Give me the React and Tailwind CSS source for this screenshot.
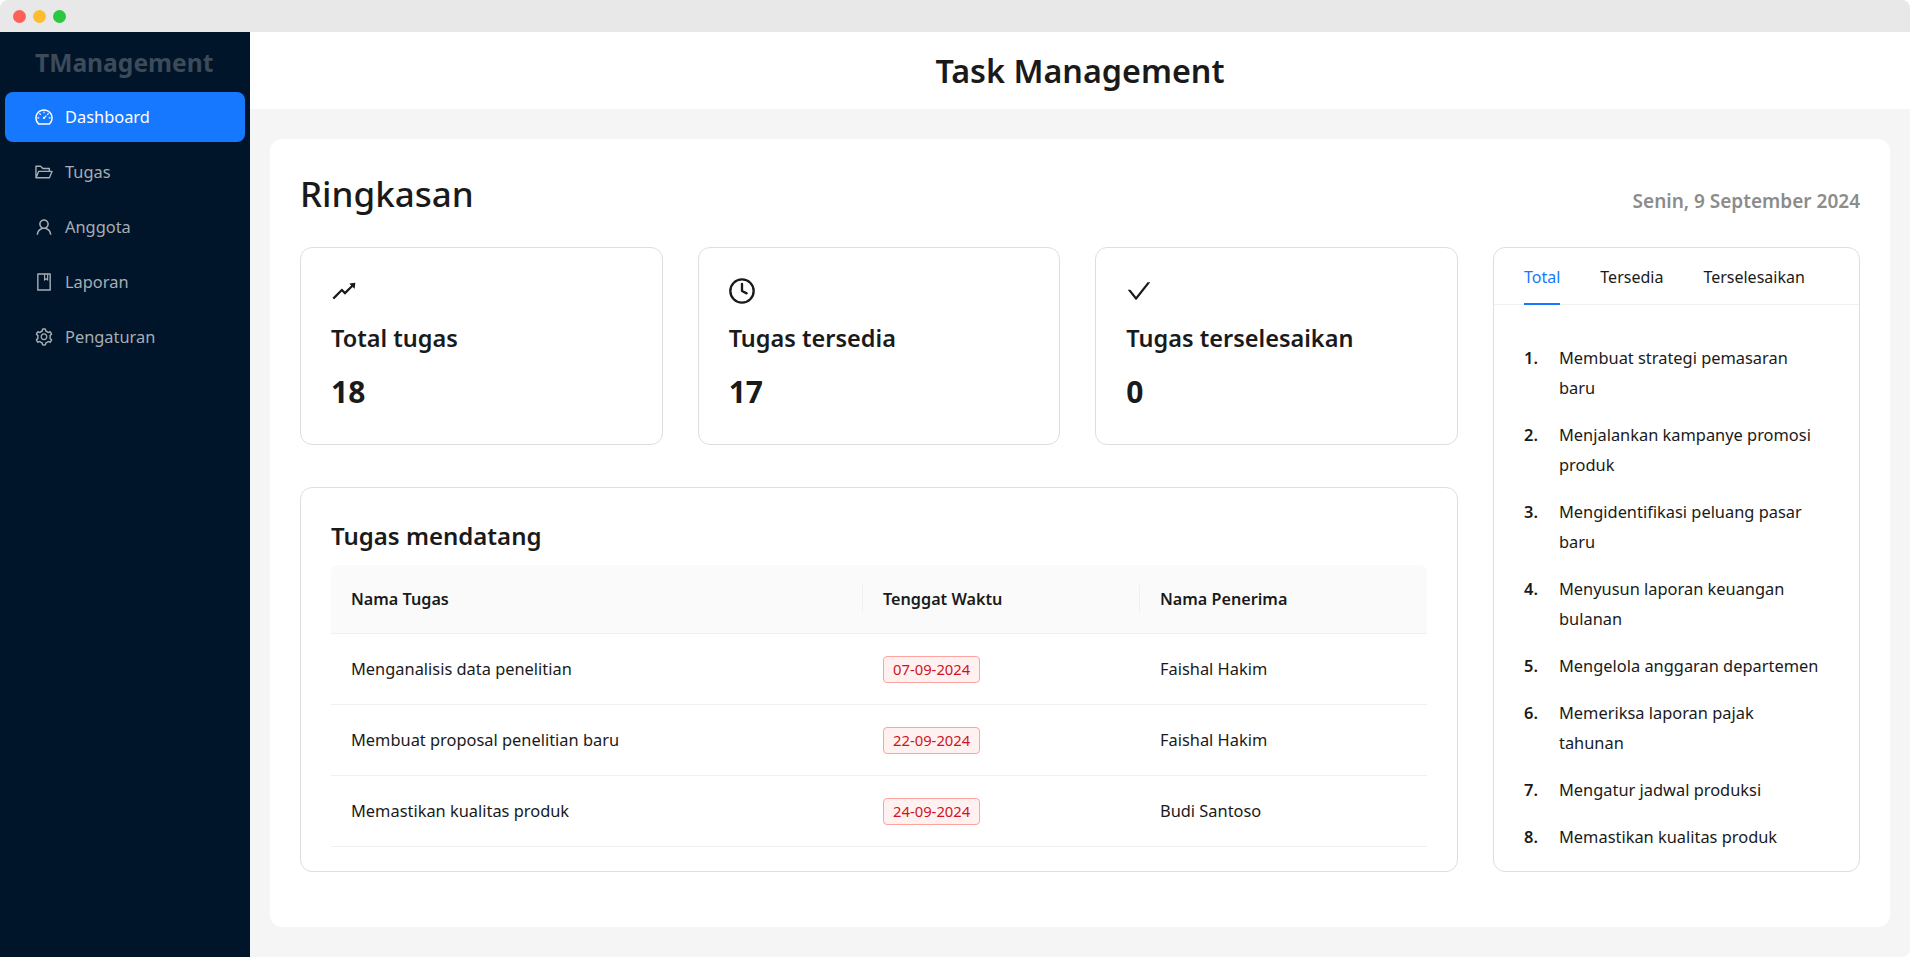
import React from "react";
import { AiOutlineDashboard, AiOutlineFolderOpen, AiOutlineUser, AiOutlineBook, AiOutlineSetting, AiOutlineRise, AiOutlineCheck } from "react-icons/ai";
import { LuClock } from "react-icons/lu";

const menu = [
  ["Dashboard", AiOutlineDashboard],
  ["Tugas", AiOutlineFolderOpen],
  ["Anggota", AiOutlineUser],
  ["Laporan", AiOutlineBook],
  ["Pengaturan", AiOutlineSetting],
];
const stats = [
  ["Total tugas", "18", AiOutlineRise],
  ["Tugas tersedia", "17", LuClock],
  ["Tugas terselesaikan", "0", AiOutlineCheck],
];
const rows = [
  ["Menganalisis data penelitian", "07-09-2024", "Faishal Hakim"],
  ["Membuat proposal penelitian baru", "22-09-2024", "Faishal Hakim"],
  ["Memastikan kualitas produk", "24-09-2024", "Budi Santoso"],
];
const list = [
  "Membuat strategi pemasaran baru",
  "Menjalankan kampanye promosi produk",
  "Mengidentifikasi peluang pasar baru",
  "Menyusun laporan keuangan bulanan",
  "Mengelola anggaran departemen",
  "Memeriksa laporan pajak tahunan",
  "Mengatur jadwal produksi",
  "Memastikan kualitas produk",
];

export default function App() {
  return (
    <div className="h-[957px] w-[1910px] overflow-hidden bg-white font-['Noto_Sans',sans-serif] text-[#1a1a1a]">
      <div className="h-8 rounded-t-lg bg-[#e8e8e8] flex items-center gap-[7px] pl-[13px]">
        <span className="h-[13px] w-[13px] rounded-full bg-[#ff5f57]" />
        <span className="h-[13px] w-[13px] rounded-full bg-[#febc2e]" />
        <span className="h-[13px] w-[13px] rounded-full bg-[#28c840]" />
      </div>
      <div className="flex h-[925px]">
        <aside className="w-[250px] shrink-0 bg-[#001529]">
          <div className="h-[60px] pl-[35px] pt-[11px] text-[24.6px] leading-[40px] font-bold text-[#3c4a59]">TManagement</div>
          <nav className="flex flex-col gap-[5px] px-[5px]">
            {menu.map(([label, Icon], i) => (
              <div
                key={label}
                className={i === 0
                  ? "flex h-[50px] items-center gap-[11px] rounded-lg bg-[#1677ff] pl-[29px] text-[16.4px] text-white"
                  : "flex h-[50px] items-center gap-[11px] rounded-lg pl-[29px] text-[16.4px] text-[#a6adb4]"}
              >
                <Icon className="h-5 w-5" />
                <span>{label}</span>
              </div>
            ))}
          </nav>
        </aside>
        <main className="flex-1 rounded-br-lg bg-[#f5f5f5]">
          <header className="flex h-[77px] items-center justify-center bg-white text-[32.3px] font-semibold">Task Management</header>
          <div className="mx-5 mt-[30px] h-[788px] rounded-xl bg-white px-[30px] pt-[30px]">
            <div className="flex h-[78px] items-start justify-between">
              <h1 className="text-[35px] leading-[50px] font-medium">Ringkasan</h1>
              <div className="pt-[17px] text-[19px] leading-[30px] font-semibold text-[#8c8c8c]">Senin, 9 September 2024</div>
            </div>
            <div className="flex gap-[35px]">
              <div className="w-[1158px]">
                <div className="grid grid-cols-3 gap-[35px]">
                  {stats.map(([title, val, Icon]) => (
                    <div key={title} className="h-[198px] rounded-xl border border-[#dedede] pl-[30px] pt-[29px]">
                      <Icon className="-ml-px h-[28px] w-[28px]" />
                      <div className="mt-[15px] text-[23.5px] leading-[36px] font-semibold">{title}</div>
                      <div className="mt-[14px] text-[30px] leading-[44px] font-bold">{val}</div>
                    </div>
                  ))}
                </div>
                <div className="mt-[42px] h-[385px] rounded-xl border border-[#dedede] px-[30px] pt-[30px]">
                  <h2 className="text-[24px] leading-[36px] font-semibold">Tugas mendatang</h2>
                  <div className="mt-[11px] flex h-[69px] items-center rounded-t-lg border-b border-[#f0f0f0] bg-[#fafafa] text-[16.2px] font-semibold">
                    <div className="w-[531px] pl-5">Nama Tugas</div>
                    <div className="w-[277px] border-l border-[#f0f0f0] pl-5 leading-[28px]">Tenggat Waktu</div>
                    <div className="border-l border-[#f0f0f0] pl-5 leading-[28px]">Nama Penerima</div>
                  </div>
                  {rows.map(([a, b, c]) => (
                    <div key={a + b} className="flex h-[71px] items-center border-b border-[#f0f0f0] text-[16.4px]">
                      <div className="w-[531px] pl-5">{a}</div>
                      <div className="w-[277px] pl-[21px]">
                        <span className="inline-block h-[27px] rounded border border-[#ffa39e] bg-[#fff1f0] px-[9px] text-[14.8px] leading-[25px] text-[#cf1322]">{b}</span>
                      </div>
                      <div className="pl-[21px]">{c}</div>
                    </div>
                  ))}
                </div>
              </div>
              <div className="h-[625px] w-[367px] overflow-hidden rounded-xl border border-[#dedede]">
                <div className="flex h-[57px] gap-10 border-b border-[#f0f0f0] pl-[30px] text-[16px]">
                  <div className="h-[57px] border-b-2 border-[#1677ff] pt-[17px] text-[#1677ff]">Total</div>
                  <div className="pt-[17px]">Tersedia</div>
                  <div className="pt-[17px]">Terselesaikan</div>
                </div>
                <ol className="px-[30px] pt-[38px] text-[16.4px] leading-[30px]">
                  {list.map((t, i) => (
                    <li key={t} className="mb-[17px] flex">
                      <span className="w-[35px] shrink-0 font-semibold">{i + 1}.</span>
                      <span className={i === 4 ? "w-[258px] whitespace-nowrap" : "w-[258px]"}>{t}</span>
                    </li>
                  ))}
                </ol>
              </div>
            </div>
          </div>
        </main>
      </div>
    </div>
  );
}
